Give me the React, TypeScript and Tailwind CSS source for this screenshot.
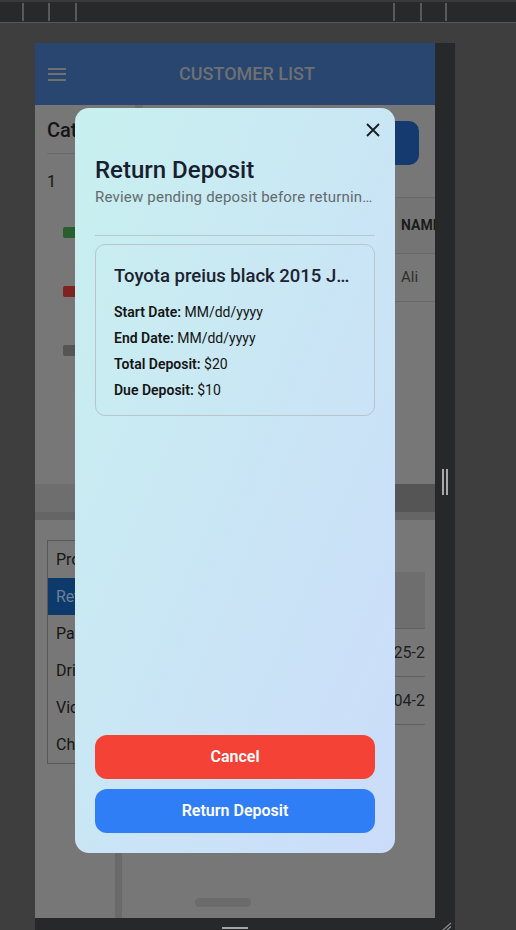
import React from "react";

function Sep() {
  return <div className="w-[2px] my-[1px] bg-[#5a5a5a]" />;
}

function CloseIcon() {
  return (
    <svg width="14" height="14" viewBox="0 0 14 14" fill="none">
      <path d="M1 1L13 13M13 1L1 13" stroke="#1b1f24" strokeWidth="1.9" strokeLinecap="butt" />
    </svg>
  );
}

export default function App() {
  const listItems = ["Profile", "Return", "Payments", "Drivers", "Vicles", "Charges"];
  return (
    <div className="w-[516px] h-[930px] bg-[#3e3e3e] overflow-hidden flex flex-col font-['Roboto',sans-serif]">
      {/* top toolbar */}
      <div className="h-[23px] shrink-0 flex flex-col">
        <div className="h-[2px] bg-[#3a3a3a]" />
        <div className="h-[20px] bg-[#28292b] flex">
          <div className="w-[22px]" />
          <Sep />
          <div className="w-[24px]" />
          <Sep />
          <div className="w-[25px]" />
          <Sep />
          <div className="w-[316px]" />
          <Sep />
          <div className="w-[25px]" />
          <Sep />
          <div className="w-[23px]" />
          <Sep />
        </div>
        <div className="h-[1px] bg-[#575757]" />
      </div>

      {/* device */}
      <div className="ml-[35px] mt-[20px] w-[420px] flex-1 bg-[#27282a] flex flex-col">
        <div className="h-[875px] flex">
          {/* phone */}
          <div className="w-[400px] h-[875px] shrink-0 relative overflow-hidden bg-[#777777] flex flex-col">
            {/* app bar */}
            <div className="h-[62px] shrink-0 bg-[#28466f] flex items-center">
              <div className="ml-[13px] w-[18px] flex flex-col gap-[3.5px]">
                <div className="h-[2px] bg-[#707070]" />
                <div className="h-[2px] bg-[#707070]" />
                <div className="h-[2px] bg-[#707070]" />
              </div>
              <div className="flex-1 flex justify-center pl-[24px]">
                <span className="text-[18px] leading-[24px] font-medium text-[#6f7072]">CUSTOMER LIST</span>
              </div>
              <div className="w-[31px]" />
            </div>

            {/* top section */}
            <div className="h-[379px] shrink-0 flex">
              <div className="w-[100px] shrink-0 pl-[12px] pt-[13px] flex flex-col overflow-hidden">
                <div className="text-[20px] leading-[24px] font-medium text-[#151515] whitespace-nowrap">Category</div>
                <div className="mt-[11px] h-px bg-[#6a6a6a]" />
                <div className="mt-[18px] text-[16px] leading-[20px] text-[#151515]">1</div>
                <div className="ml-[16px] mt-[35px] w-[14px] h-[11px] rounded-[2px] bg-[#2a5e2e]" />
                <div className="ml-[16px] mt-[48px] w-[14px] h-[11px] rounded-[2px] bg-[#7d2420]" />
                <div className="ml-[16px] mt-[48px] w-[14px] h-[11px] rounded-[2px] bg-[#555555]" />
              </div>
              <div className="w-[8px] shrink-0 bg-[#6c6c6c]" />
              <div className="flex-1 min-w-0 flex flex-col">
                <div className="self-end mr-[16px] mt-[16px] w-[120px] h-[44px] rounded-[10px] bg-[#143a70]" />
                <div className="mt-[32px] h-[57px] border-t border-b border-[#686868] bg-[#747474] flex items-center">
                  <div className="w-[258px] shrink-0" />
                  <span className="text-[14px] font-bold text-[#1b1b1b] whitespace-nowrap">NAME</span>
                </div>
                <div className="h-[48px] border-b border-[#686868] flex items-center">
                  <div className="w-[258px] shrink-0" />
                  <span className="text-[15px] text-[#2e2e2e] whitespace-nowrap">Ali</span>
                </div>
              </div>
            </div>

            {/* band */}
            <div className="h-[28px] shrink-0 flex">
              <div className="w-[100px] bg-[#6e6e6e]" />
              <div className="flex-1 bg-[#555555]" />
            </div>
            <div className="h-[8px] shrink-0 bg-[#656565]" />

            {/* lower section */}
            <div className="flex-1 flex">
              <div className="w-[80px] shrink-0 pl-[12px] pt-[20px]">
                <div className="w-[64px] border border-[#585858] flex flex-col">
                  {listItems.map((t, i) => (
                    <div
                      key={t}
                      className={
                        i === 1
                          ? "h-[37px] flex items-center pl-[8px] bg-[#0d3a6a] text-[#6c8099] text-[16px] whitespace-nowrap overflow-hidden"
                          : "h-[37px] flex items-center pl-[8px] text-[#161616] text-[16px] whitespace-nowrap overflow-hidden"
                      }
                    >
                      {t}
                    </div>
                  ))}
                </div>
              </div>
              <div className="w-[7px] shrink-0 bg-[#6a6a6a]" />
              <div className="flex-1 min-w-0 pr-[10px] pt-[52px] flex flex-col">
                <div className="h-[57px] bg-[#6e6e6e] border-b border-[#606060]" />
                <div className="h-[48px] border-b border-[#606060] flex items-center justify-end overflow-hidden">
                  <span className="text-[16px] text-[#1e1e1e] whitespace-nowrap">2024-05-25-2</span>
                </div>
                <div className="h-[48px] border-b border-[#606060] flex items-center justify-end overflow-hidden">
                  <span className="text-[16px] text-[#1e1e1e] whitespace-nowrap">2024-06-04-2</span>
                </div>
              </div>
            </div>

            {/* bottom sheet handle */}
            <div className="absolute left-[160px] bottom-[11px] w-[56px] h-[9px] rounded-full bg-[#6b6b6b]" />

            {/* modal */}
            <div className="absolute left-[40px] top-[65px] w-[320px] h-[745px] rounded-[14px] bg-gradient-to-br from-[#c8f0ef] to-[#cbdcfa] px-[20px] pt-[10px] pb-[20px] flex flex-col">
              <div className="h-[24px] flex justify-end">
                <div className="w-[24px] h-[24px] -mr-[10px] flex items-center justify-center">
                  <CloseIcon />
                </div>
              </div>
              <div className="mt-[14px] text-[24px] leading-[28px] font-medium text-[#172030]">Return Deposit</div>
              <div className="mt-[3px] text-[15px] leading-[20px] tracking-[0.2px] text-[#646a6e] truncate">
                Review pending deposit before returning it to the customer
              </div>
              <div className="mt-[28px] h-px bg-[#b7c7ce]" />
              <div className="mt-[8px] border border-[#b8c5cb] rounded-[10px] px-[18px] pt-[19px] pb-[12px]">
                <div className="text-[18.5px] leading-[24px] font-medium text-[#1c2230] truncate">
                  Toyota preius black 2015 Jxl 4567
                </div>
                <div className="mt-[11px] flex flex-col text-[14px] leading-[26px] text-[#141414]">
                  <div>
                    <span className="font-semibold">Start Date:</span> MM/dd/yyyy
                  </div>
                  <div>
                    <span className="font-semibold">End Date:</span> MM/dd/yyyy
                  </div>
                  <div>
                    <span className="font-semibold">Total Deposit:</span> $20
                  </div>
                  <div>
                    <span className="font-semibold">Due Deposit:</span> $10
                  </div>
                </div>
              </div>
              <div className="mt-auto flex flex-col gap-[10px]">
                <div className="h-[44px] rounded-[12px] bg-[#f44336] flex items-center justify-center text-white text-[16px] font-semibold">
                  Cancel
                </div>
                <div className="h-[44px] rounded-[12px] bg-[#2f7ef6] flex items-center justify-center text-white text-[16px] font-semibold">
                  Return Deposit
                </div>
              </div>
            </div>
          </div>

          {/* right strip with grips */}
          <div className="flex-1 flex justify-center items-start pt-[426px] gap-[2px]">
            <div className="w-[2px] h-[26px] bg-[#a8a8a8]" />
            <div className="w-[2px] h-[26px] bg-[#a8a8a8]" />
          </div>
        </div>
        {/* bottom strip */}
        <div className="flex-1 flex items-start">
          <div className="ml-[187px] mt-[9px] w-[26px] h-[2px] bg-[#a6a6a6]" />
          <div className="ml-auto mr-[3px] mt-[4px]">
            <svg width="10" height="8" viewBox="0 0 10 8" fill="none">
              <path d="M1 8L9 1M5 8L9 4.5" stroke="#8a8a8a" strokeWidth="1.2" />
            </svg>
          </div>
        </div>
      </div>
    </div>
  );
}
